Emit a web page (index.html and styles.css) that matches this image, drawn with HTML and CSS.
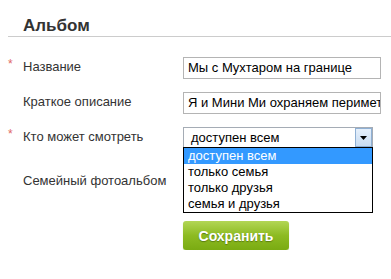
FILE: index.html
```html
<!DOCTYPE html>
<html lang="ru">
<head>
    <meta charset="UTF-8">
    <title>Альбом</title>
    <link rel="stylesheet" href="styles.css">
</head>
<body>
    <div class="album">
        <h2 class="album-title">Альбом</h2>
        <form class="album-form">
            <div class="row">
                <span class="star">*</span>
                <label class="label">Название</label>
                <div class="field"><div class="text-input">Мы с Мухтаром на границе</div></div>
            </div>
            <div class="row">
                <span class="star"></span>
                <label class="label">Краткое описание</label>
                <div class="field"><div class="text-input">Я и Мини Ми охраняем периметр</div></div>
            </div>
            <div class="row">
                <span class="star">*</span>
                <label class="label">Кто может смотреть</label>
                <div class="field">
                    <div class="select">
                        <span class="select-value">доступен всем</span>
                        <span class="select-arrow"><svg width="7" height="4" viewBox="0 0 7 4"><path d="M0 0h7L3.5 4z" fill="#000"/></svg></span>
                    </div>
                    <ul class="options">
                        <li class="option active">доступен всем</li>
                        <li class="option">только семья</li>
                        <li class="option">только друзья</li>
                        <li class="option">семья и друзья</li>
                    </ul>
                </div>
            </div>
            <div class="row row-family">
                <span class="star"></span>
                <label class="label">Семейный фотоальбом</label>
            </div>
            <div class="actions">
                <button type="button" class="save-btn">Сохранить</button>
            </div>
        </form>
    </div>
</body>
</html>
```

FILE: styles.css
```css
body {
    margin: 0;
    background: #ffffff;
    font-family: Arial, "Liberation Sans", sans-serif;
    font-size: 13px;
    color: #333333;
}
.album {
    padding: 16px 0 0 8px;
}
.album-title {
    margin: 0;
    padding: 0 0 0 15px;
    font-size: 17px;
    font-weight: bold;
    color: #333333;
    border-bottom: 1px solid #cccccc;
    line-height: 20px;
}
.album-form {
    padding-top: 20px;
}
.row {
    display: flex;
    align-items: flex-start;
    height: 35px;
}
.star {
    width: 15px;
    color: #e06666;
    font-size: 12px;
    line-height: 14px;
}
.label {
    width: 160px;
    line-height: 20px;
}
.field {
    position: relative;
}
.text-input {
    box-sizing: border-box;
    width: 198px;
    height: 22px;
    border: 1px solid #b4b4b4;
    padding: 0 4px;
    font-size: 13px;
    line-height: 20px;
    color: #000000;
    white-space: nowrap;
    overflow: hidden;
}
.select {
    box-sizing: border-box;
    width: 190px;
    height: 21px;
    border: 1px solid #a5acb5;
    display: flex;
    align-items: center;
    justify-content: space-between;
    font-size: 13px;
    color: #000000;
    padding-left: 7px;
}
.select-arrow {
    box-sizing: border-box;
    width: 17px;
    height: 19px;
    border: 1px solid #8fb0d4;
    background: linear-gradient(#e6f0fb, #c8dcf2);
    display: flex;
    align-items: center;
    justify-content: center;
}
.options {
    position: absolute;
    left: 0;
    top: 20px;
    box-sizing: border-box;
    width: 190px;
    margin: 0;
    padding: 0;
    list-style: none;
    border: 1px solid #000000;
    background: #ffffff;
    z-index: 2;
}
.option {
    font-size: 13px;
    line-height: 16px;
    padding-left: 4px;
    color: #000000;
}
.option.active {
    background: #3399ff;
    color: #ffffff;
}
.row-family {
    height: 59px;
    padding-top: 9px;
    box-sizing: border-box;
}
.actions {
    padding-left: 175px;
}
.save-btn {
    width: 106px;
    height: 29px;
    border: none;
    border-radius: 3px;
    background: linear-gradient(#b2d655, #8dbb22 50%, #7aab12);
    box-shadow: 0 1px 1px #c8dca0;
    color: #ffffff;
    font-family: Arial, "Liberation Sans", sans-serif;
    font-size: 14px;
    font-weight: bold;
    text-shadow: 0 1px 1px #5a7d10;
}
```
